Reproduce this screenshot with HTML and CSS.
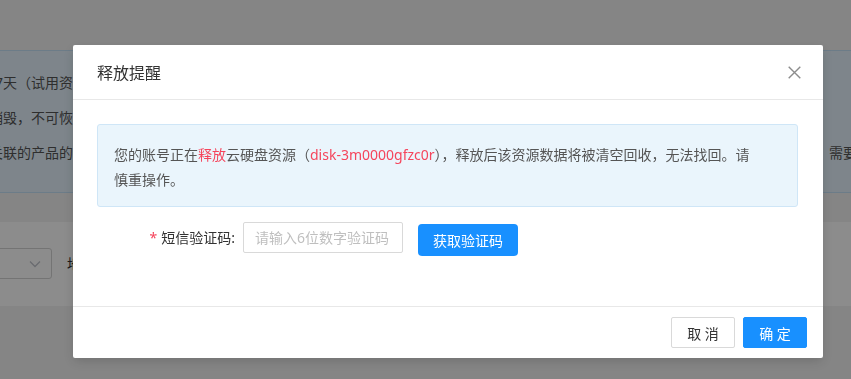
FILE: index.html
```html
<!DOCTYPE html>
<html lang="zh-CN">
<head>
  <meta charset="UTF-8" />
  <meta name="viewport" content="width=device-width, initial-scale=1" />
  <title>释放提醒</title>
  <link rel="stylesheet" href="styles.css">
</head>
<body>
  <!-- page behind the dialog -->
  <div class="page">
    <div class="page-top"></div>

    <div class="notice">
      <div class="notice-line"><span class="notice-left">年7天（试用资</span></div>
      <div class="notice-line"><span class="notice-left">销毁，不可恢</span></div>
      <div class="notice-line">
        <span class="notice-left">关联的产品的</span>
        <span class="notice-right">需要</span>
      </div>
    </div>

    <div class="filter-card">
      <div class="select-box">
        <svg class="chevron" width="12" height="8" viewBox="0 0 12 8"><path d="M1 1.5 L6 6.5 L11 1.5" fill="none" stroke="#c0c4cc" stroke-width="1.3"/></svg>
      </div>
      <span class="filter-label">地</span>
    </div>
  </div>

  <div class="mask"></div>

  <!-- Dialog -->
  <div class="dialog">
    <div class="dialog-header">
      <span class="dialog-title">释放提醒</span>
      <svg class="dialog-close" width="13" height="13" viewBox="0 0 13 13">
        <path d="M0.7 0.7 L12.3 12.3 M12.3 0.7 L0.7 12.3" stroke="#8c8c8c" stroke-width="1.4" fill="none"/>
      </svg>
    </div>

    <div class="dialog-body">
      <div class="alert">
        您的账号正在<span class="hl">释放</span>云硬盘资源（<span class="hl latin">disk-3m0000gfzc0r</span>），释放后该资源数据将被清空回收，无法找回。请<br>慎重操作。
      </div>

      <div class="form-row">
        <label class="form-label"><span class="required">*</span>短信验证码:</label>
        <input class="code-input" type="text" placeholder="请输入6位数字验证码">
        <button class="code-btn">获取验证码</button>
      </div>
    </div>

    <div class="dialog-footer">
      <button class="btn">取 消</button>
      <button class="btn btn-primary">确 定</button>
    </div>
  </div>
</body>
</html>
```

FILE: styles.css
```css
* {
  margin: 0;
  padding: 0;
  box-sizing: border-box;
}

body {
  font-family: "Noto Sans", "Noto Sans CJK SC", sans-serif;
  font-size: 14px;
  color: #333;
  background: #f3f3f3;
  width: 851px;
  height: 379px;
  overflow: hidden;
}

/* background page */
.page {
  display: flex;
  flex-direction: column;
}

.page-top {
  height: 50px;
}

.notice {
  background: #e5f3fe;
  border-top: 1px solid #c5e2f7;
  border-bottom: 1px solid #c5e2f7;
  padding: 14px 0 22px;
  height: 143px;
}

.notice-line {
  display: flex;
  height: 35px;
  line-height: 35px;
  white-space: nowrap;
  color: #555;
}

.notice-left {
  width: 73px;
  overflow: hidden;
  direction: rtl;
}

.notice-right {
  margin-left: auto;
  width: 22px;
  overflow: hidden;
}

.filter-card {
  margin-top: 29px;
  height: 84px;
  background: #fff;
  display: flex;
  align-items: flex-start;
  padding-top: 26px;
}

.select-box {
  width: 152px;
  height: 31px;
  margin-left: -100px;
  border: 1px solid #d4d4d4;
  border-radius: 3px;
  display: flex;
  align-items: center;
  justify-content: flex-end;
  padding-right: 10px;
}

.filter-label {
  margin-left: 15px;
  width: 6px;
  overflow: hidden;
  line-height: 31px;
  color: #333;
}

.mask {
  position: fixed;
  inset: 0;
  background: rgba(0, 0, 0, 0.45);
}

/* dialog */
.dialog {
  position: fixed;
  left: 73px;
  top: 45px;
  width: 750px;
  background: #fff;
  border-radius: 2px;
  box-shadow: 0 4px 12px rgba(0, 0, 0, 0.15);
}

.dialog-header {
  height: 55px;
  padding: 0 22px 0 24px;
  border-bottom: 1px solid #e8e8e8;
  display: flex;
  align-items: center;
  justify-content: space-between;
}

.dialog-title {
  font-size: 16px;
  color: #333;
}

.dialog-body {
  padding: 24px 25px 50px 24px;
}

.alert {
  background: #eaf5fc;
  border: 1px solid #cfe6f7;
  border-radius: 3px;
  padding: 17px 17px 14px 16px;
  line-height: 25px;
  color: #555;
}

.hl {
  color: #f5455c;
}

.form-row {
  display: flex;
  align-items: flex-start;
  margin-top: 15px;
}

.form-label {
  width: 146px;
  padding-right: 8px;
  text-align: right;
  line-height: 31px;
  color: #333;
}

.required {
  color: #f5455c;
  margin-right: 4px;
}

.code-input {
  width: 160px;
  height: 31px;
  border: 1px solid #d9d9d9;
  border-radius: 2px;
  padding: 0 11px;
  font-family: inherit;
  font-size: 14px;
  outline: none;
}

.code-input::placeholder {
  color: #bfbfbf;
}

.code-btn {
  margin-left: 15px;
  margin-top: 2px;
  width: 100px;
  height: 32px;
  border: none;
  border-radius: 4px;
  background: #1890ff;
  color: #fff;
  font-family: inherit;
  font-size: 14px;
}

.dialog-footer {
  border-top: 1px solid #e8e8e8;
  padding: 10px 16px;
  display: flex;
  justify-content: flex-end;
  gap: 8px;
}

.btn {
  width: 64px;
  height: 31px;
  border: 1px solid #d9d9d9;
  border-radius: 2px;
  background: #fff;
  color: #333;
  font-family: inherit;
  font-size: 14px;
}

.btn-primary {
  background: #1890ff;
  border-color: #1890ff;
  color: #fff;
}
```
